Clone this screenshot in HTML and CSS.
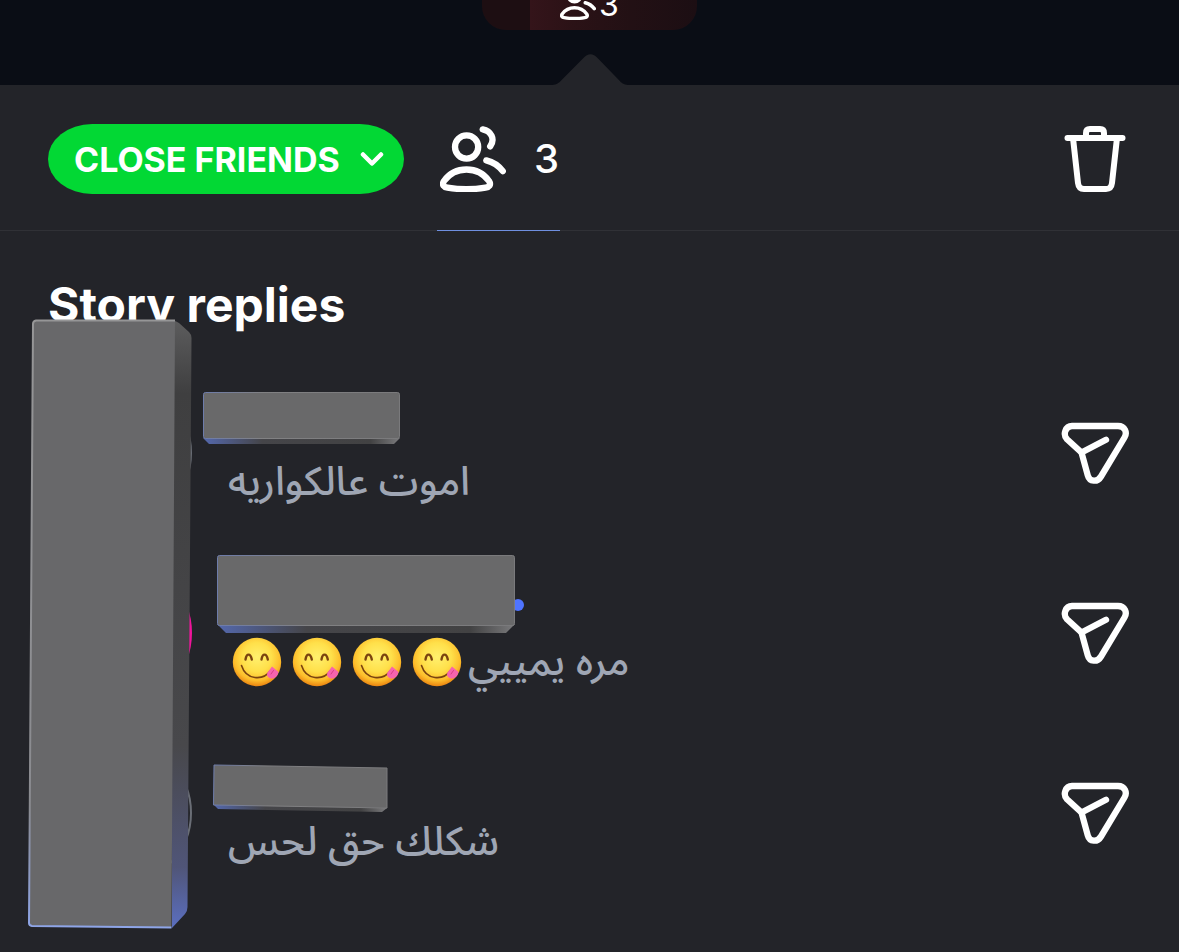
FILE: index.html
```
<!DOCTYPE html>
<html lang="en">
<head>
    <meta charset="utf-8">
    <title>Story replies</title>
    <link rel="stylesheet" href="styles.css">
</head>
<body>
    <!-- shared drawings -->
    <svg class="defs" aria-hidden="true">
        <defs>
            <radialGradient id="face" cx="0.5" cy="0.4" r="0.6">
                <stop offset="0" stop-color="#fff06e"/>
                <stop offset="0.5" stop-color="#ffe04a"/>
                <stop offset="0.8" stop-color="#fdbe2c"/>
                <stop offset="1" stop-color="#ea8410"/>
            </radialGradient>
            <linearGradient id="side" x1="0" y1="0" x2="0" y2="1">
                <stop offset="0" stop-color="#5c5c5d"/>
                <stop offset="0.12" stop-color="#3f3f40"/>
                <stop offset="0.7" stop-color="#48484b"/>
                <stop offset="0.9" stop-color="#505578"/>
                <stop offset="1" stop-color="#5b6fc0"/>
            </linearGradient>
            <linearGradient id="edge" x1="0" y1="0" x2="0" y2="1">
                <stop offset="0" stop-color="#969697"/>
                <stop offset="0.8" stop-color="#8a8b90"/>
                <stop offset="1" stop-color="#8ea5e8"/>
            </linearGradient>
            <linearGradient id="bottom" x1="0" y1="0" x2="1" y2="0">
                <stop offset="0" stop-color="#5468ad"/>
                <stop offset="0.3" stop-color="#454549"/>
                <stop offset="0.85" stop-color="#424243"/>
                <stop offset="1" stop-color="#7b7b7d"/>
            </linearGradient>
            <linearGradient id="rim" x1="0" y1="0" x2="1" y2="0">
                <stop offset="0" stop-color="#6d7cab"/>
                <stop offset="0.3" stop-color="#818183"/>
                <stop offset="1" stop-color="#7a7a7c"/>
            </linearGradient>
        </defs>
        <symbol id="users" viewBox="0 0 66 66">
            <g fill="none" stroke="currentColor" stroke-width="6.300" stroke-linecap="round" stroke-linejoin="round">
                <circle cx="26.600" cy="21" r="11.600"/>
                <path d="M26.500 43.500C37 43.500 44 48 49 55C51.500 59 49 61 45.500 61.600C33 63.800 20 63.800 7.500 61.600C4 61 1.500 59 4 55C9 48 16 43.500 26.500 43.500Z"/>
                <path d="M42.700 3.400C51 5 55.500 13 50.200 20.400"/>
                <path d="M46.300 34.400C53 36 58.500 39.500 62.800 45.200"/>
            </g>
        </symbol>
        <symbol id="send" viewBox="0 0 68 62">
            <g fill="none" stroke="currentColor" stroke-width="6.300" stroke-linecap="round" stroke-linejoin="round">
                <path d="M11 4H57C64 4 66.500 10.500 63.500 15.500L40 54.500C36.500 60.500 28.500 60 26.800 53.500L20.500 30.500L6 17.200C1.500 12.500 4.500 4 11 4Z"/>
                <path d="M20.500 30.500L45 17.700"/>
            </g>
        </symbol>
        <symbol id="yum" viewBox="0 0 50 50">
            <circle cx="25" cy="25" r="24.200" fill="url(#face)"/>
            <g fill="none" stroke="#7a4310" stroke-linecap="round">
                <path d="M13.500 22.500C14.500 16 18.500 16 19.800 22.500" stroke-width="2.400"/>
                <path d="M29.500 22.500C30.500 16 34.500 16 35.800 22.500" stroke-width="2.400"/>
                <path d="M9.500 28.500C14 43 31 44.500 39 33" stroke-width="1.600"/>
            </g>
            <path d="M40 29.500L46.500 35C46 39.500 41.500 43 37.500 41C35 39.800 34.500 37.500 35.500 35.500Z" fill="#f763ae"/>
            <path d="M41.500 33.500L39 37" stroke="#d93d86" stroke-width="1" stroke-linecap="round"/>
        </symbol>
    </svg>

    <header class="stage">
        <div class="thumb">
            <svg class="thumb-icon" aria-hidden="true"><use href="#users"/></svg>
            <span>3</span>
        </div>
        <svg class="pointer" viewBox="0 0 78 32" aria-hidden="true">
            <path d="M0 32C5 31.500 7 29.500 9 27.500L32 4.500C37 -1 42 -1 47 4.500L69 27C71 29.500 74 31.500 78 32Z" fill="#232429"/>
        </svg>
    </header>

    <nav class="toolbar">
        <button class="audience" type="button">
            CLOSE FRIENDS
            <svg class="chevron" viewBox="0 0 24 16" aria-hidden="true">
                <path d="M3 3.500L12 12.500L21 3.500" fill="none" stroke="#fff" stroke-width="4.500" stroke-linecap="round" stroke-linejoin="round"/>
            </svg>
        </button>
        <button class="viewers" type="button" aria-label="3 viewers">
            <svg class="viewers-icon" aria-hidden="true"><use href="#users"/></svg>
            <span>3</span>
        </button>
        <button class="icon-button trash" type="button" aria-label="Delete story">
            <svg viewBox="0 0 62 66" width="62" height="66" aria-hidden="true">
                <g fill="none" stroke="#fff" stroke-width="6" stroke-linecap="round" stroke-linejoin="round">
                    <path d="M3.500 12H58.500"/>
                    <path d="M22 11V7Q22 3 26 3H36Q40 3 40 7V11"/>
                    <path d="M9 12L14 57Q14.700 63 20 63H42Q47.300 63 48 57L53 12"/>
                </g>
            </svg>
        </button>
    </nav>

    <main class="replies">
        <h1>Story replies</h1>
        <ul class="list">
            <li class="reply">
                <div class="avatar seen"></div>
                <div class="body">
                    <div class="name">
                        <svg class="cover cover-one" viewBox="0 0 197 52" aria-hidden="true">
                            <path d="M0 46L6 52H191L197 46Z" fill="url(#bottom)"/>
                            <rect x="0.500" y="0.500" width="196" height="46" rx="2" fill="#69696a" stroke="url(#rim)"/>
                        </svg>
                    </div>
                    <p class="message" dir="rtl" lang="ar">اموت عالكواريه</p>
                </div>
                <button class="icon-button" type="button" aria-label="Reply">
                    <svg class="send" aria-hidden="true"><use href="#send"/></svg>
                </button>
            </li>
            <li class="reply">
                <div class="avatar fresh"></div>
                <div class="body">
                    <div class="name">
                        <svg class="cover cover-two" viewBox="0 0 308 78" aria-hidden="true">
                            <circle cx="301" cy="50" r="6" fill="#4f74ff"/>
                            <path d="M0 69L9 78H289L298 69Z" fill="url(#bottom)"/>
                            <rect x="0.500" y="0.500" width="297" height="70" rx="2" fill="#69696a" stroke="url(#rim)"/>
                        </svg>
                    </div>
                    <p class="message" dir="rtl" lang="ar">
                        <span>مره يمييي</span>
                        <span class="emojis" role="img" aria-label="😋😋😋😋">
                            <svg class="emoji"><use href="#yum"/></svg>
                            <svg class="emoji"><use href="#yum"/></svg>
                            <svg class="emoji"><use href="#yum"/></svg>
                            <svg class="emoji"><use href="#yum"/></svg>
                        </span>
                    </p>
                </div>
                <button class="icon-button" type="button" aria-label="Reply">
                    <svg class="send" aria-hidden="true"><use href="#send"/></svg>
                </button>
            </li>
            <li class="reply">
                <div class="avatar seen"></div>
                <div class="body">
                    <div class="name">
                        <svg class="cover cover-three" viewBox="0 0 175 49" aria-hidden="true">
                            <path d="M0 40L5 45L169 48L174 44Z" fill="url(#bottom)"/>
                            <path d="M1 1L174 4V44L0.500 41Z" fill="#69696a" stroke="url(#rim)" stroke-linejoin="round"/>
                        </svg>
                    </div>
                    <p class="message" dir="rtl" lang="ar">شكلك حق لحس</p>
                </div>
                <button class="icon-button" type="button" aria-label="Reply">
                    <svg class="send" aria-hidden="true"><use href="#send"/></svg>
                </button>
            </li>
        </ul>
        <!-- block over the avatars -->
        <svg class="cover cover-tall" viewBox="0 0 164 610" aria-hidden="true">
            <path d="M144 1.500Q148 1.500 151 4L161 13Q163.500 15.500 163.500 19L159.500 588Q159.500 592 157 595L144 609Z" fill="url(#side)"/>
            <path d="M8 1.500H147L143.500 608.500L4 607Q1 606.500 1 604L5 5Q5 2 8 1.500Z" fill="#68686a"/>
            <path d="M147 1.500H8Q5 2 5 5L1 604Q1 606.500 4 607L143.500 608.500" fill="none" stroke="url(#edge)" stroke-width="2"/>
        </svg>
    </main>
</body>
</html>
```
FILE: styles.css
```
/* page */
body {
    margin: 0;
    min-height: 100vh;
    background-color: #232429;
    color: #fff;
    font-family: Inter, "Liberation Sans", sans-serif;
}

button {
    padding: 0;
    border: none;
    background: none;
    color: inherit;
    font-family: inherit;
    cursor: pointer;
}

svg {
    display: block;
    flex-shrink: 0;
}

.defs {
    position: absolute;
    width: 0;
    height: 0;
}

/* story strip */
.stage {
    display: flex;
    flex-direction: column;
    align-items: center;
    justify-content: space-between;
    height: 85px;
    background-color: #0a0d15;
}

.thumb {
    box-sizing: border-box;
    display: flex;
    align-items: flex-end;
    justify-content: center;
    gap: 3px;
    width: 215px;
    height: 30px;
    padding-bottom: 10px;
    overflow: hidden;
    border-radius: 0 0 24px 24px;
    background: linear-gradient(to right, #1d0e12 48px, #34141a 48px, #2b1216 90px, #221014 150px, #1c0e13);
    font-size: 32px;
    line-height: 20px;
}

.thumb-icon {
    width: 36px;
    height: 36px;
}

.thumb span {
    padding-bottom: 5px;
}

.pointer {
    width: 78px;
    height: 31px;
}

/* toolbar */
.toolbar {
    display: flex;
    align-items: flex-start;
    height: 145px;
    border-bottom: 1px solid #303136;
    padding: 0 50px 0 48px;
}

.audience {
    box-sizing: border-box;
    display: flex;
    align-items: center;
    justify-content: space-between;
    width: 356px;
    height: 70px;
    margin-top: 39px;
    padding: 0 20px 0 26px;
    border-radius: 44px / 35px;
    background-color: #02d834;
    font-size: 34px;
    font-weight: 700;
}

.chevron {
    width: 24px;
    height: 16px;
}

.viewers {
    box-sizing: border-box;
    display: flex;
    align-items: center;
    gap: 28px;
    width: 123px;
    height: 146px;
    margin-left: 33px;
    padding-left: 3px;
    padding-top: 2px;
    border-bottom: 1px solid #6f8fe0;
    font-size: 40px;
    font-weight: 500;
}

.viewers-icon {
    width: 66px;
    height: 66px;
}

.icon-button {
    display: flex;
    align-items: center;
    justify-content: center;
    width: 68px;
    height: 68px;
    margin-left: auto;
}

.trash {
    margin-top: 40px;
}

/* replies */
.replies {
    position: relative;
    padding: 44px 50px 48px 48px;
}

h1 {
    margin: 0 0 28px;
    font-size: 48px;
    font-weight: 700;
    line-height: 60px;
}

.list {
    margin: 0;
    padding: 0;
    list-style: none;
}

.reply {
    display: flex;
    align-items: center;
    gap: 24px;
    height: 180px;
}

.avatar {
    box-sizing: border-box;
    width: 144px;
    height: 144px;
    border-radius: 50%;
}

.seen {
    border: 2px solid #6a6e76;
}

.fresh {
    border: 4px solid #f0149b;
}

.name {
    position: relative;
    height: 60px;
}

.message {
    display: flex;
    align-items: center;
    height: 58px;
    margin: 0;
    padding: 0 12px 2px;
    color: #9fa6b4;
    font-family: Inter, "Noto Sans Arabic", "DejaVu Sans", sans-serif;
    font-size: 40px;
    font-weight: 500;
}

.emojis {
    display: flex;
    gap: 10px;
    padding: 0 6px 0 4px;
}

.emoji {
    width: 50px;
    height: 50px;
}

.send {
    width: 68px;
    height: 62px;
}

/* blocks that hide names and pictures */
.cover {
    position: absolute;
}

.cover-one {
    top: -1px;
    left: -13px;
    width: 197px;
    height: 52px;
}

.cover-two {
    top: -18px;
    left: 1px;
    width: 308px;
    height: 78px;
}

.cover-three {
    top: 11px;
    left: -3px;
    width: 175px;
    height: 49px;
}

.cover-tall {
    top: 88px;
    left: 28px;
    width: 164px;
    height: 610px;
}
```
